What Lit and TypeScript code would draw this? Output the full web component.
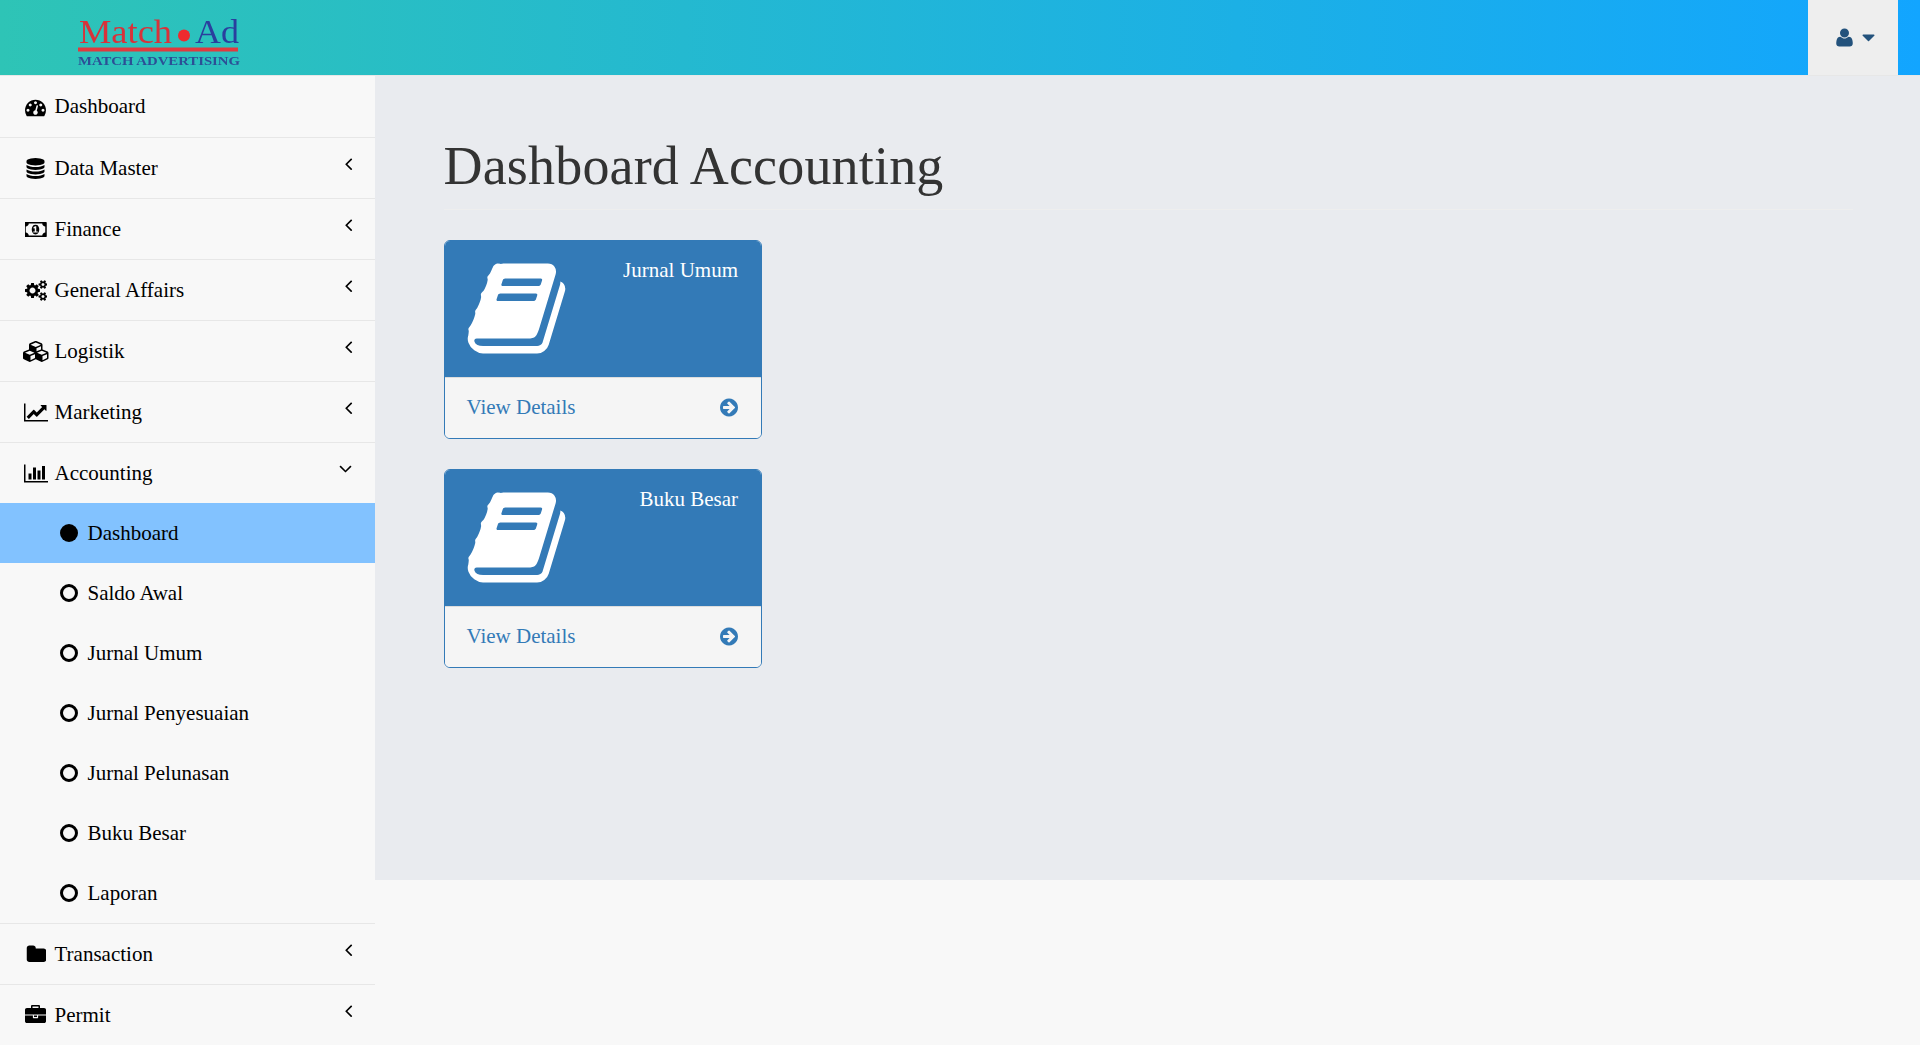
import { LitElement, html, css, svg, nothing } from 'lit';
import { customElement } from 'lit/decorators.js';

interface Icon {
  w: number;
  d: string;
}

// font awesome 4 glyph outlines, all on a 1792 high box
const ICONS: Record<string, Icon> = {
  dashboard: {
    w: 1792,
    d: 'M384 1216q0-53-37.5-90.5t-90.5-37.5-90.5 37.5-37.5 90.5 37.5 90.5 90.5 37.5 90.5-37.5 37.5-90.5zm192-448q0-53-37.5-90.5t-90.5-37.5-90.5 37.5-37.5 90.5 37.5 90.5 90.5 37.5 90.5-37.5 37.5-90.5zm428 481l101-382q6-26-7.5-48.5t-38.5-29.5-48 6.5-30 39.5l-101 382q-60 5-107 43.5t-63 98.5q-20 77 20 146t117 89 146-20 89-117q16-60-6-117t-72-91zm660-33q0-53-37.5-90.5t-90.5-37.5-90.5 37.5-37.5 90.5 37.5 90.5 90.5 37.5 90.5-37.5 37.5-90.5zm-640-640q0-53-37.5-90.5t-90.5-37.5-90.5 37.5-37.5 90.5 37.5 90.5 90.5 37.5 90.5-37.5 37.5-90.5zm448 192q0-53-37.5-90.5t-90.5-37.5-90.5 37.5-37.5 90.5 37.5 90.5 90.5 37.5 90.5-37.5 37.5-90.5zm320 448q0 261-141 483-19 29-54 29h-1402q-35 0-54-29-141-221-141-483 0-182 71-348t191-286 286-191 348-71 348 71 286 191 191 286 71 348z',
  },
  database: {
    w: 1792,
    d: 'M896 768q237 0 443-43t325-127v170q0 69-103 128t-280 93.5-385 34.5-385-34.5-280-93.5-103-128v-170q119 84 325 127t443 43zm0 768q237 0 443-43t325-127v170q0 69-103 128t-280 93.5-385 34.5-385-34.5-280-93.5-103-128v-170q119 84 325 127t443 43zm0-384q237 0 443-43t325-127v170q0 69-103 128t-280 93.5-385 34.5-385-34.5-280-93.5-103-128v-170q119 84 325 127t443 43zm0-1152q208 0 385 34.5t280 93.5 103 128v128q0 69-103 128t-280 93.5-385 34.5-385-34.5-280-93.5-103-128v-128q0-69 103-128t280-93.5 385-34.5z',
  },
  money: {
    w: 1920,
    d: 'M704 1152h384v-96h-128v-448h-114l-148 137 77 80q42-37 55-57h2v288h-128v96zm512-256q0 70-21 142t-59.5 134-101.5 101-138 39-138-39-101.5-101-59.5-134-21-142 21-142 59.5-134 101.5-101 138-39 138 39 101.5 101 59.5 134 21 142zm512 256v-512q-106 0-181-75t-75-181h-1152q0 106-75 181t-181 75v512q106 0 181 75t75 181h1152q0-106 75-181t181-75zm128-832v1152q0 26-19 45t-45 19h-1792q-26 0-45-19t-19-45v-1152q0-26 19-45t45-19h1792q26 0 45 19t19 45z',
  },
  cogs: {
    w: 1920,
    d: 'M896 896q0-106-75-181t-181-75-181 75-75 181 75 181 181 75 181-75 75-181zm768 512q0-52-38-90t-90-38-90 38-38 90q0 53 37.5 90.5t90.5 37.5 90.5-37.5 37.5-90.5zm0-1024q0-52-38-90t-90-38-90 38-38 90q0 53 37.5 90.5t90.5 37.5 90.5-37.5 37.5-90.5zm-384 421v185q0 10-7 19.5t-16 10.5l-155 24q-11 35-32 76 34 48 90 115 7 11 7 20 0 12-7 19-23 30-82.5 89.5t-78.5 59.5q-11 0-21-7l-115-90q-37 19-77 31-11 108-23 155-7 24-30 24h-186q-11 0-20-7.5t-10-17.5l-23-153q-34-10-75-31l-118 89q-7 7-20 7-11 0-21-8-144-133-144-160 0-9 7-19 10-14 41-53t47-61q-23-44-35-82l-152-24q-10-1-17-9.5t-7-19.5v-185q0-10 7-19.5t16-10.5l155-24q11-35 32-76-34-48-90-115-7-11-7-20 0-12 7-20 22-30 82-89t79-59q11 0 21 7l115 90q34-18 77-32 11-108 23-154 7-24 30-24h186q11 0 20 7.5t10 17.5l23 153q34 10 75 31l118-89q8-7 20-7 11 0 21 8 144 133 144 160 0 8-7 19-12 16-42 54t-45 60q23 48 34 82l152 23q10 2 17 10.5t7 19.5zm640 533v140q0 16-149 31-12 27-30 52 51 113 51 138 0 4-4 7-122 71-124 71-8 0-46-47t-52-68q-20 2-30 2t-30-2q-14 21-52 68t-46 47q-2 0-124-71-4-3-4-7 0-25 51-138-18-25-30-52-149-15-149-31v-140q0-16 149-31 13-29 30-52-51-113-51-138 0-4 4-7 4-2 35-20t59-34 30-16q8 0 46 46.5t52 67.5q20-2 30-2t30 2q51-71 92-112l6-2q4 0 124 70 4 3 4 7 0 25-51 138 17 23 30 52 149 15 149 31zm0-1024v140q0 16-149 31-12 27-30 52 51 113 51 138 0 4-4 7-122 71-124 71-8 0-46-47t-52-68q-20 2-30 2t-30-2q-14 21-52 68t-46 47q-2 0-124-71-4-3-4-7 0-25 51-138-18-25-30-52-149-15-149-31v-140q0-16 149-31 13-29 30-52-51-113-51-138 0-4 4-7 4-2 35-20t59-34 30-16q8 0 46 46.5t52 67.5q20-2 30-2t30 2q51-71 92-112l6-2q4 0 124 70 4 3 4 7 0 25-51 138 17 23 30 52 149 15 149 31z',
  },
  cubes: {
    w: 2240,
    d: 'M640 1632l384-192v-314l-384 164v342zm-64-454l404-173-404-173-404 173zm1088 454l384-192v-314l-384 164v342zm-64-454l404-173-404-173-404 173zm-448-293l384-165v-266l-384 164v267zm-64-379l441-189-441-189-441 189zm1088 518v416q0 36-19 67t-52 47l-448 224q-25 14-57 14t-57-14l-448-224q-4-2-7-4-2 2-7 4l-448 224q-25 14-57 14t-57-14l-448-224q-33-16-52-47t-19-67v-416q0-38 21.5-70t56.5-48l434-186v-400q0-38 21.5-70t56.5-48l448-192q23-10 50-10t50 10l448 192q35 16 56.5 48t21.5 70v400l434 186q36 16 57 48t21 70z',
  },
  line: {
    w: 2048,
    d: 'M2048 1536v128h-2048v-1536h128v1408h1920zm-128-1248v435q0 21-19.5 29.5t-35.5-7.5l-121-121-633 633q-10 10-23 10t-23-10l-233-233-416 416-192-192 585-585q10-10 23-10t23 10l233 233 464-464-121-121q-16-16-7.5-35.5t29.5-19.5h435q14 0 23 9t9 23z',
  },
  bars: {
    w: 2048,
    d: 'M640 896v512h-256v-512h256zm384-512v1024h-256v-1024h256zm1024 1152v128h-2048v-1536h128v1408h1920zm-640-896v768h-256v-768h256zm384-384v1152h-256v-1152h256z',
  },
  folder: {
    w: 1728,
    d: 'M1728 608v704q0 92-66 158t-158 66h-1216q-92 0-158-66t-66-158v-960q0-92 66-158t158-66h320q92 0 158 66t66 158v32h672q92 0 158 66t66 158z',
  },
  briefcase: {
    w: 1792,
    d: 'M640 256h512v-128h-512v128zm1152 640v480q0 66-47 113t-113 47h-1472q-66 0-113-47t-47-113v-480h672v160q0 26 19 45t45 19h320q26 0 45-19t19-45v-160h672zm-768 0v128h-256v-128h256zm768-480v384h-1792v-384q0-66 47-113t113-47h352v-160q0-40 28-68t68-28h576q40 0 68 28t28 68v160h352q66 0 113 47t47 113z',
  },
  user: {
    w: 1792,
    d: 'M1600 1405q0 120-73 189.5t-194 69.5h-874q-121 0-194-69.5t-73-189.5q0-53 3.5-103.5t14-109 26.5-108.5 43-97.5 62-81 85.5-53.5 111.5-20q9 0 42 21.5t74.5 48 108 48 133.5 21.5 133.5-21.5 108-48 74.5-48 42-21.5q61 0 111.5 20t85.5 53.5 62 81 43 97.5 26.5 108.5 14 109 3.5 103.5zm-320-893q0 159-112.5 271.5t-271.5 112.5-271.5-112.5-112.5-271.5 112.5-271.5 271.5-112.5 271.5 112.5 112.5 271.5z',
  },
  caret: {
    w: 1792,
    d: 'M1408 704q0 26-19 45l-448 448q-19 19-45 19t-45-19l-448-448q-19-19-19-45t19-45 45-19h896q26 0 45 19t19 45z',
  },
  angleLeft: {
    w: 1792,
    d: 'M1203 544q0 13-10 23l-393 393 393 393q10 10 10 23t-10 23l-50 50q-10 10-23 10t-23-10l-466-466q-10-10-10-23t10-23l466-466q10-10 23-10t23 10l50 50q10 10 10 23z',
  },
  angleDown: {
    w: 1792,
    d: 'M1395 736q0 13-10 23l-466 466q-10 10-23 10t-23-10l-466-466q-10-10-10-23t10-23l50-50q10-10 23-10t23 10l393 393 393-393q10-10 23-10t23 10l50 50q10 10 10 23z',
  },
  book: {
    w: 1792,
    d: 'M1703 478q40 57 18 129l-275 906q-19 64-76.5 107.5t-122.5 43.5h-923q-77 0-148.5-53.5t-99.5-131.5q-24-67-2-127 0-4 3-27t4-37q1-8-3-21.5t-3-19.5q2-11 8-21t16.5-23.5 16.5-23.5q23-38 45-91.5t30-91.5q3-10 .5-30t-.5-28q3-11 17-28t17-23q21-36 42-92t25-90q1-9-2.5-32t.5-28q4-13 22-30.5t22-22.5q19-26 42.5-84.5t27.5-96.5q1-8-3-25.5t-2-26.5q2-8 9-18t18-23 17-21q8-12 16.5-30.5t15-35 16-36 19.5-32 26.5-23.5 36-11.5 47.5 5.5l-1 3q38-9 51-9h761q74 0 114 56t18 130l-274 906q-36 119-71.5 153.5t-128.5 34.5h-869q-27 0-38 15-11 16-1 43 24 70 144 70h923q29 0 56-15.5t35-41.5l300-987q7-22 5-57 38 15 59 43zm-1064 2q-4 13 2 22.5t20 9.5h608q13 0 25.5-9.5t16.5-22.5l21-64q4-13-2-22.5t-20-9.5h-608q-13 0-25.5 9.5t-16.5 22.5zm-83 256q-4 13 2 22.5t20 9.5h608q13 0 25.5-9.5t16.5-22.5l21-64q4-13-2-22.5t-20-9.5h-608q-13 0-25.5 9.5t-16.5 22.5z',
  },
  arrowCircle: {
    w: 1536,
    d: 'M1285 897q0-27-18-45l-91-91-362-362q-18-18-45-18t-45 18l-91 91q-18 18-18 45t18 45l189 189h-502q-26 0-45 19t-19 45v128q0 26 19 45t45 19h502l-189 189q-19 19-19 45t19 45l91 91q18 18 45 18t45-18l362-362 91-91q18-18 18-45zm251-1q0 209-103 385.5t-279.5 279.5-385.5 103-385.5-103-279.5-279.5-103-385.5 103-385.5 279.5-279.5 385.5-103 385.5 103 279.5 279.5 103 385.5z',
  },
};

const ring = svg`<circle cx="9" cy="9" r="7.5" fill="none" stroke="currentColor" stroke-width="3" />`;
const dot = svg`<circle cx="9" cy="9" r="9" fill="currentColor" />`;

function icon(name: string, size = 21) {
  const i = ICONS[name];
  return html`<svg
    class="ico"
    width=${(i.w / 1792) * size}
    height=${size}
    viewBox="0 0 ${i.w} 1792"
    fill="currentColor"
  >
    <path d=${i.d} />
  </svg>`;
}

const MENU = [
  { label: 'Dashboard', icon: 'dashboard' },
  { label: 'Data Master', icon: 'database', arrow: true },
  { label: 'Finance', icon: 'money', arrow: true },
  { label: 'General Affairs', icon: 'cogs', arrow: true },
  { label: 'Logistik', icon: 'cubes', arrow: true },
  { label: 'Marketing', icon: 'line', arrow: true },
  {
    label: 'Accounting',
    icon: 'bars',
    arrow: true,
    open: true,
    children: [
      'Dashboard',
      'Saldo Awal',
      'Jurnal Umum',
      'Jurnal Penyesuaian',
      'Jurnal Pelunasan',
      'Buku Besar',
      'Laporan',
    ],
  },
  { label: 'Transaction', icon: 'folder', arrow: true },
  { label: 'Permit', icon: 'briefcase', arrow: true },
];

const CARDS = ['Jurnal Umum', 'Buku Besar'];

@customElement('app-root')
export class AppRoot extends LitElement {
  renderLogo() {
    return html`<svg class="logo" width="166" height="70" viewBox="0 0 166 70">
      <text
        class="logo-word red"
        x="1"
        y="43"
        textLength="93"
        lengthAdjust="spacingAndGlyphs"
      >
        Match
      </text>
      <circle cx="106" cy="35.5" r="6" fill="#ee2a2e" />
      <text
        class="logo-word blue"
        x="117"
        y="43"
        textLength="44"
        lengthAdjust="spacingAndGlyphs"
      >
        Ad
      </text>
      <rect x="0" y="47.5" width="160" height="4" fill="#df3b3f" />
      <text
        class="logo-sub"
        x="0"
        y="64.5"
        textLength="162"
        lengthAdjust="spacingAndGlyphs"
      >
        MATCH ADVERTISING
      </text>
    </svg>`;
  }

  renderItem(item: (typeof MENU)[number]) {
    return html`<li class="item">
      <a class="link">
        <span class="slot">${icon(item.icon)}</span>
        <span>${item.label}</span>
        ${item.arrow
          ? html`<span class="arrow ${item.open ? 'down' : ''}"
              >${icon(item.open ? 'angleDown' : 'angleLeft')}</span
            >`
          : nothing}
      </a>
      ${item.children
        ? html`<ul class="sub">
            ${item.children.map(
              (c, i) => html`<li class="sub-link ${i === 0 ? 'active' : ''}">
                <svg class="bullet" width="18" height="18" viewBox="0 0 18 18">
                  ${i === 0 ? dot : ring}
                </svg>
                <span>${c}</span>
              </li>`,
            )}
          </ul>`
        : nothing}
    </li>`;
  }

  renderCard(title: string) {
    return html`<div class="card">
      <div class="card-head">
        <span class="book">${icon('book', 105)}</span>
        <span class="card-title">${title}</span>
      </div>
      <div class="card-foot">
        <span>View Details</span>
        ${icon('arrowCircle', 21)}
      </div>
    </div>`;
  }

  render() {
    return html`
      <header class="navbar">
        <div class="brand">${this.renderLogo()}</div>
        <div class="user">${icon('user', 21)} ${icon('caret', 21)}</div>
      </header>
      <div class="body">
        <nav class="sidebar">
          <ul class="menu">
            ${MENU.map((m) => this.renderItem(m))}
          </ul>
        </nav>
        <main class="page">
          <h1 class="page-title">Dashboard Accounting</h1>
          <div class="cards">${CARDS.map((c) => this.renderCard(c))}</div>
        </main>
      </div>
    `;
  }

  static styles = css`
    :host {
      display: block;
      height: 100vh;
      overflow: hidden;
      background: #f8f8f8;
      color: #000;
      font-family: 'Liberation Serif', 'Times New Roman', serif;
      font-size: 21px;
    }

    * {
      box-sizing: border-box;
    }

    ul {
      list-style: none;
      margin: 0;
      padding: 0;
    }

    .ico {
      display: block;
      flex: none;
    }

    .navbar {
      display: flex;
      justify-content: space-between;
      height: 76px;
      padding-right: 22px;
      border-bottom: 1px solid #e7e7e7;
      background: linear-gradient(to right, #2ec4b6, #12a5ff);
    }

    .brand {
      padding-left: 78px;
    }

    .logo {
      display: block;
      filter: blur(0.45px);
    }

    .logo-word {
      font-size: 34px;
      font-family: 'Liberation Serif', serif;
    }

    .logo-word.red {
      fill: #d8323a;
    }

    .logo-word.blue {
      fill: #2a3f9e;
    }

    .logo-sub {
      font-size: 13px;
      font-weight: 700;
      fill: #2c4f96;
    }

    .user {
      display: flex;
      align-items: center;
      justify-content: center;
      width: 90px;
      gap: 3.5px;
      padding-left: 7px;
      background: #eee;
      color: #23527c;
    }

    .body {
      display: flex;
      align-items: flex-start;
    }

    .sidebar {
      flex: none;
      width: 375px;
    }

    .item {
      border-bottom: 1px solid #e7e7e7;
    }

    .item:last-child {
      border-bottom: none;
    }

    .link {
      display: flex;
      align-items: center;
      height: 60px;
      padding-right: 22px;
    }

    .item:first-child .link {
      height: 61px;
    }

    .slot {
      display: flex;
      justify-content: center;
      width: 54.5px;
      padding-left: 17px;
    }

    .arrow {
      margin-left: auto;
      margin-top: -9.5px;
      margin-right: -6px;
    }

    .arrow.down {
      margin-right: -3px;
    }

    .sub-link {
      display: flex;
      align-items: center;
      gap: 9.5px;
      height: 60px;
      padding-left: 60px;
    }

    .sub-link.active {
      background: #82c2ff;
    }

    .bullet {
      flex: none;
    }

    .page {
      flex: 1;
      min-width: 0;
      height: 804px;
      padding: 0 67.5px 0 68.5px;
      background: #e9ebef;
    }

    .page-title {
      margin: 61px 0 30px;
      padding-bottom: 12.5px;
      border-bottom: 1px solid #eee;
      font-size: 54px;
      font-weight: 400;
      line-height: 1.1;
      letter-spacing: 0.18px;
      color: #333;
    }

    .cards {
      display: flex;
      flex-direction: column;
      gap: 30px;
      width: 318px;
    }

    .card {
      overflow: hidden;
      border: 1px solid #337ab7;
      border-radius: 6px;
      background: #fff;
    }

    .card-head {
      display: flex;
      justify-content: space-between;
      height: 136px;
      padding: 15px 18.5px 15px 22.5px;
      background: #337ab7;
      color: #fff;
    }

    .card-title {
      margin-top: 2.5px;
      margin-right: 4px;
    }

    .book {
      margin-left: -3.5px;
    }

    .card-foot {
      display: flex;
      align-items: center;
      justify-content: space-between;
      height: 61px;
      padding: 0 22.5px 0 22px;
      border-top: 1px solid #ddd;
      background: #f5f5f5;
      color: #337ab7;
    }
  `;
}
